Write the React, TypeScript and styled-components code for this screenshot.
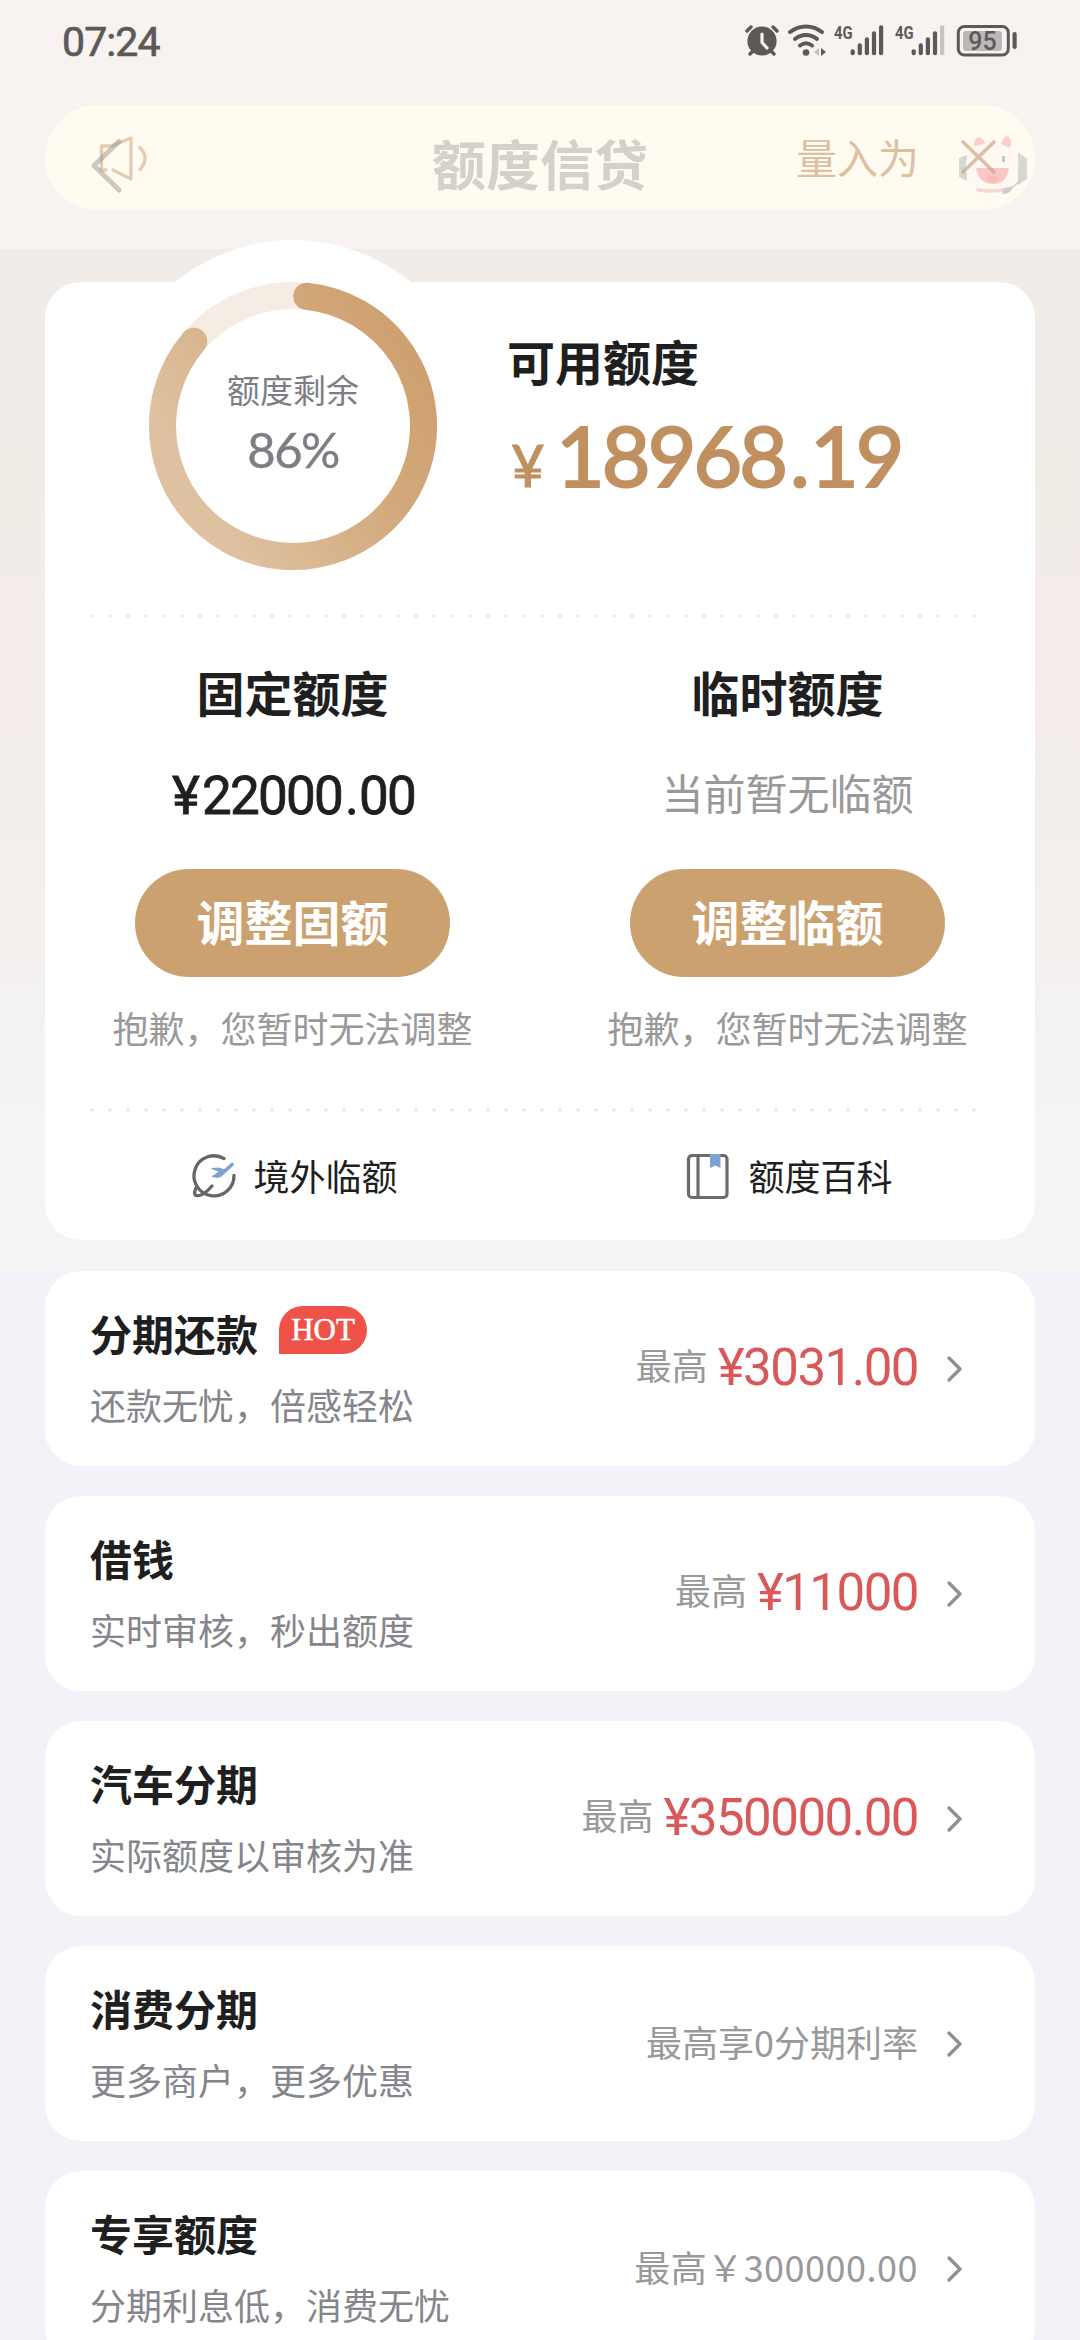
import React from "react";
import styled, { createGlobalStyle } from "styled-components";

const CJK = `"Noto Sans CJK SC", sans-serif`;

const Global = createGlobalStyle`
  * { box-sizing: border-box; }
  html, body { margin: 0; padding: 0; }
  body { width: 1080px; height: 2340px; overflow: hidden; background: #f2f3f8; font-family: ${CJK}; color: #1f1f1f; }
`;

const Page = styled.div`
  width: 1080px;
  height: 2340px;
  overflow: hidden;
  display: flex;
  flex-direction: column;
`;

const Header = styled.header`
  height: 249px;
  flex: none;
  background: #f8f3f1;
  display: flex;
  flex-direction: column;
`;

const StatusBar = styled.div`
  height: 105px;
  flex: none;
  display: flex;
  justify-content: space-between;
  padding: 0 58px 0 62px;
`;

const Clock = styled.div`
  font: 400 41px/42px Roboto, sans-serif;
  -webkit-text-stroke: 0.7px #5c5a59;
  color: #5c5a59;
  margin-top: 21px;
  letter-spacing: -0.9px;
`;

const StatusIcons = styled.svg`
  display: block;
  width: 280px;
  height: 46px;
  margin-top: 13px;
`;

const NoticeBar = styled.div`
  height: 105px;
  flex: none;
  margin: 0 45px;
  border-radius: 53px;
  background: #fffbf0;
  display: grid;
  grid-template-columns: 363px 264px 1fr;
  align-items: center;
  padding-right: 6px;
`;

const BackAndSpeaker = styled.svg`
  display: block;
  width: 66px;
  height: 70px;
  margin-left: 40px;
`;

const PageTitle = styled.h1`
  margin: 11px 0 0;
  text-align: center;
  font-size: 54px;
  line-height: 60px;
  font-weight: 700;
  color: #d6d0ca;
`;

const NoticeEnd = styled.div`
  display: flex;
  justify-content: flex-end;
  align-items: center;
`;

const NoticeText = styled.span`
  font-size: 41px;
  line-height: 50px;
  color: #dcc0a0;
  margin: -4px 36px 0 0;
`;

const Mascot = styled.svg`
  display: block;
  width: 74px;
  height: 75px;
`;

const Summary = styled.section`
  height: 1022px;
  flex: none;
  padding: 33px 45px 0;
  background: linear-gradient(#f1ece7 0, #f3ece8 45%, #f4f4f4 85%);
`;

const Card = styled.div`
  height: 958px;
  border-radius: 36px;
  background: #fff;
  display: flex;
  flex-direction: column;
`;

const Overview = styled.div`
  height: 332px;
  flex: none;
  display: flex;
`;

const RingBox = styled.div`
  width: 372px;
  height: 372px;
  margin: -42px 0 0 62px;
  border-radius: 50%;
  background: #fff;
  display: grid;
  place-items: center;
  & > * { grid-area: 1 / 1; }
`;

const RingSvg = styled.svg`
  display: block;
  width: 290px;
  height: 290px;
`;

const RingLabel = styled.div`
  display: flex;
  flex-direction: column;
  align-items: center;
  color: #7d7d84;
  font-size: 33px;
  line-height: 48px;
  padding-bottom: 9px;
`;

const RingPercent = styled.span`
  font: 400 49px/58px Lato, sans-serif;
  -webkit-text-stroke: 0.4px #7d7d84;
  letter-spacing: -1.6px;
  margin-top: 7px;
`;

const Available = styled.div`
  margin: 48px 0 0 28px;
  display: flex;
  flex-direction: column;
`;

const Heading = styled.h2`
  margin: 0;
  font-size: 48px;
  line-height: 60px;
  font-weight: 700;
`;

const BigAmount = styled.div`
  font: 400 84px/90px Lato, sans-serif;
  -webkit-text-stroke: 2.2px #c09060;
  color: #c09060;
  letter-spacing: -2.9px;
  margin-top: 20px;
  padding-left: 4px;
  display: flex;
  align-items: baseline;
`;

const BigPoint = styled.span`
  margin: 0 3px 0 5px;
`;

const Yen = styled.span`
  width: 45px;
  font-size: 58px;
  line-height: 60px;
  -webkit-text-stroke-width: 1.2px;
`;

const Dots = styled.div`
  height: 4px;
  flex: none;
  margin: 0 45px;
  background: radial-gradient(circle at 2px 2px, #e9e9e9 1.4px, transparent 2.2px) 0 0 / 18px 4px repeat-x;
`;

const Columns = styled.div`
  flex: none;
  display: grid;
  grid-template-columns: 1fr 1fr;
`;

const Limit = styled.div`
  display: flex;
  flex-direction: column;
  align-items: center;
  height: 490px;
  padding-top: 43px;
`;

const LimitAmount = styled.div`
  height: 60px;
  margin-top: 45px;
  padding-left: 2px;
  font: 400 53px/60px Roboto, sans-serif;
  -webkit-text-stroke: 0.8px #1f1f1f;
  letter-spacing: -1.8px;
`;

const LimitYen = styled.span`
  margin-right: 4px;
`;

const LimitPoint = styled.span`
  margin: 0 2px 0 3px;
`;

const LimitEmpty = styled.div`
  height: 60px;
  margin: 41px 0 4px;
  font-size: 42px;
  line-height: 60px;
  color: #999;
`;

const AdjustButton = styled.button`
  width: 315px;
  height: 108px;
  margin: 43px 0 0;
  padding: 0 0 6px;
  border: 0;
  border-radius: 54px;
  background: #cba16f;
  color: #fff;
  font: 700 48px/60px ${CJK};
`;

const Note = styled.p`
  margin: 25px 0 0;
  font-size: 36px;
  line-height: 50px;
  color: #999;
`;

const LinkItem = styled.a`
  display: flex;
  justify-content: center;
  align-items: center;
  gap: 16px;
  height: 128px;
  padding-left: 2px;
  font-size: 36px;
  line-height: 50px;
`;

const LinkText = styled.span`
  margin-top: -2px;
`;

const LinkIcon = styled.svg`
  display: block;
  width: 48px;
  height: 48px;
`;

const List = styled.main`
  display: flex;
  flex-direction: column;
  gap: 30px;
  padding: 0 45px;
`;

const Row = styled.div`
  height: 195px;
  flex: none;
  border-radius: 36px;
  background: #fff;
  padding: 0 69px 0 45px;
  display: flex;
  justify-content: space-between;
`;

const RowText = styled.div`
  padding-top: 33px;
`;

const RowTitle = styled.div`
  display: flex;
  gap: 21px;
  font-size: 42px;
  line-height: 58px;
  font-weight: 700;
`;

const Hot = styled.span`
  width: 88px;
  height: 48px;
  margin-top: 2px;
  border-radius: 24px 24px 24px 0;
  background: #ef5248;
  color: #fff;
  text-align: center;
  font: 400 31px/48px "Liberation Serif", serif;
  -webkit-text-stroke: 0.5px #fff;
`;

const RowSub = styled.div`
  margin-top: 17px;
  font-size: 36px;
  line-height: 50px;
  color: #85858b;
`;

const RowEnd = styled.div`
  display: flex;
  align-items: center;
  color: #999;
  font-size: 36px;
  line-height: 60px;
`;

const RowLabel = styled.span<{ $lifted?: boolean; $spacing?: number }>`
  margin-top: ${(p) => (p.$lifted ? -9 : -6)}px;
  letter-spacing: ${(p) => p.$spacing ?? 0}px;
`;

const Price = styled.span`
  font: 400 51px/60px Roboto, sans-serif;
  letter-spacing: -1.5px;
  color: #d9595a;
  margin: -2px 0 0 10px;
`;

const Chevron = styled.svg`
  display: block;
  width: 20px;
  height: 30px;
  margin-left: 28px;
`;

type Product = { title: string; sub: string; label: string; price?: string; hot?: boolean; spacing?: number };

const products: Product[] = [
  { title: "分期还款", sub: "还款无忧，倍感轻松", label: "最高", price: "¥3031.00", hot: true },
  { title: "借钱", sub: "实时审核，秒出额度", label: "最高", price: "¥11000" },
  { title: "汽车分期", sub: "实际额度以审核为准", label: "最高", price: "¥350000.00" },
  { title: "消费分期", sub: "更多商户，更多优惠", label: "最高享0分期利率" },
  { title: "专享额度", sub: "分期利息低，消费无忧", label: "最高￥300000.00", spacing: 0.5 },
];

const point = (deg: number, r = 130.5) => {
  const a = (deg * Math.PI) / 180;
  return `${(145 + r * Math.sin(a)).toFixed(2)} ${(145 - r * Math.cos(a)).toFixed(2)}`;
};

function Ring() {
  return (
    <RingSvg viewBox="0 0 290 290" fill="none">
      <defs>
        <linearGradient id="ring" x1="0.85" y1="0" x2="0" y2="0.5">
          <stop offset="0" stopColor="#cea070" />
          <stop offset="0.35" stopColor="#d2a87a" />
          <stop offset="1" stopColor="#dec1a0" />
        </linearGradient>
      </defs>
      <circle cx="145" cy="145" r="130.5" stroke="#f5ece4" strokeWidth="27" />
      <path d={`M${point(6)}A130.5 130.5 0 1 1 ${point(310.5)}`} stroke="url(#ring)" strokeWidth="27" strokeLinecap="round" />
    </RingSvg>
  );
}

function Status() {
  const bars = [6, 12, 18, 24, 30];
  return (
    <StatusIcons viewBox="0 -10 280 46" fill="#5c5a59">
      <g stroke="#5c5a59" strokeWidth="3.4" strokeLinecap="round" fill="none">
        <path d="M5 8l4-4M35 8l-4-4M8 31l4-4M32 31l-4-4" />
      </g>
      <circle cx="20" cy="18" r="14.6" />
      <path d="M20 11v8.500l5 5.500" stroke="#f8f3f1" strokeWidth="3.2" fill="none" strokeLinecap="round" strokeLinejoin="round" />
      <g stroke="#5c5a59" strokeWidth="4" strokeLinecap="round" fill="none">
        <path d="M48 9c9.500-7.500 22.500-7.500 32 0M53 16c6.500-5.500 15.500-5.500 22 0M58 22.500c4-3 8-3 12 0" />
      </g>
      <circle cx="64" cy="29.500" r="3.300" />
      <path d="M79 25l5 4-5 4z" />
      <path d="M77 25l-5 4 5 4z" fill="#c4c0be" />
      {[0, 1].map((n) => (
        <g key={n} transform={`translate(${n * 61} 0)`}>
          <text transform="translate(92 15.500) scale(.8 1)" fontFamily="Roboto, sans-serif" fontWeight="700" fontSize="18.500">4G</text>
          {bars.map((h, i) => (
            <rect key={h} x={108.6 + i * 7.1} y={32.3 - h} width="4.200" height={h} rx="2" fill={n === 1 && i === 4 ? "#c6c3c1" : "#5c5a59"} />
          ))}
        </g>
      ))}
      <rect x="216.300" y="3.500" width="50" height="28.500" rx="6" fill="none" stroke="#5c5a59" strokeWidth="3" />
      <rect x="221" y="8" width="39" height="20" rx="3" fill="#bbb8b7" />
      <rect x="270.500" y="9" width="4.200" height="17" rx="2" />
      <text x="240.500" y="26.500" textAnchor="middle" fontFamily="Roboto, sans-serif" fontWeight="500" fontSize="25">95</text>
    </StatusIcons>
  );
}

export default function App() {
  return (
    <Page>
      <Global />
      <Header>
        <StatusBar>
          <Clock>07:24</Clock>
          <Status />
        </StatusBar>
        <NoticeBar>
          <BackAndSpeaker viewBox="85 122.5 66 70" fill="none" strokeLinecap="round" strokeLinejoin="round">
            <path d="M106 169.500h-4.500V145.500h10L131 137.500v41L113 169.500M140 147q10 11 0 22" stroke="#e5cbb0" strokeWidth="3.300" />
            <path d="M119 141L94 165l25 24.500" stroke="#a39d98" strokeOpacity=".55" strokeWidth="5" />
          </BackAndSpeaker>
          <PageTitle>额度信贷</PageTitle>
          <NoticeEnd>
            <NoticeText>量入为</NoticeText>
            <Mascot viewBox="955 120 74 75" fill="none">
              <path d="M959 158l8-3v26l-8-4zM1027 159l-9-7v33l9-6z" fill="#d7d8cf" />
              <ellipse cx="992" cy="166" rx="26" ry="25" fill="#fff8f3" stroke="#fdf3ee" />
              <path d="M974 146q0-9 6-9 4 2 5 7zM1001 144q2-8 7-8 5 5 2 12z" fill="#fbcfcd" />
              <path d="M976 168h33q-2 16-16 16t-17-16z" fill="#fbc8c5" />
              <path d="M985 179q8-7 15 0-7 6-15 0z" fill="#f8bab7" />
              <path d="M978 190q13 2 25 0" stroke="#fad5d2" strokeWidth="3.500" strokeLinecap="round" />
              <path d="M1003.500 156v6" stroke="#c9c5c2" strokeWidth="3" />
              <path d="M1023 178l-10 9" stroke="#cfcfc9" strokeWidth="1.500" />
              <path d="M1014 186l-10 2-2 6q8 1 12-8z" fill="#cfcfc9" />
              <path d="M963 142l31 30M994 142l-31 30" stroke="#bf9c77" strokeOpacity=".6" strokeWidth="3.600" strokeLinecap="round" />
            </Mascot>
          </NoticeEnd>
        </NoticeBar>
      </Header>
      <Summary>
        <Card>
          <Overview>
            <RingBox>
              <Ring />
              <RingLabel>
                额度剩余
                <RingPercent>86%</RingPercent>
              </RingLabel>
            </RingBox>
            <Available>
              <Heading>可用额度</Heading>
              <BigAmount><Yen>¥</Yen>18968<BigPoint>.</BigPoint>19</BigAmount>
            </Available>
          </Overview>
          <Dots />
          <Columns>
            <Limit>
              <Heading>固定额度</Heading>
              <LimitAmount><LimitYen>¥</LimitYen>22000<LimitPoint>.</LimitPoint>00</LimitAmount>
              <AdjustButton>调整固额</AdjustButton>
              <Note>抱歉，您暂时无法调整</Note>
            </Limit>
            <Limit>
              <Heading>临时额度</Heading>
              <LimitEmpty>当前暂无临额</LimitEmpty>
              <AdjustButton>调整临额</AdjustButton>
              <Note>抱歉，您暂时无法调整</Note>
            </Limit>
          </Columns>
          <Dots />
          <Columns>
            <LinkItem>
              <LinkIcon viewBox="189 1152 48 48" fill="none" stroke="#666" strokeWidth="3.300" strokeLinecap="round" strokeLinejoin="round">
                <path d="M224 1158.500A20 20 0 1 0 234 1175.500" />
                <path d="M196.500 1187q-5 10 3 8.500 5-1 12.500-9.500" />
                <path d="M232 1164.500l-12 11" stroke="#7ba3d3" strokeWidth="3.600" />
                <path d="M212 1168.500l7-.5 6 2-7 7.500-6-1 2.500-1.500 4.500-3.500z" fill="#7ba3d3" stroke="#7ba3d3" strokeWidth="1" />
              </LinkIcon>
              <LinkText>境外临额</LinkText>
            </LinkItem>
            <LinkItem>
              <LinkIcon viewBox="0 0 48 48" fill="none" stroke="#6b6b6b" strokeWidth="3.200">
                <rect x="4.500" y="3.500" width="38.500" height="42" rx="3.500" />
                <path d="M14 3v43" />
                <path d="M26 2h10.500v14l-5.250-2.500L26 16z" fill="#7ba3d3" stroke="none" />
              </LinkIcon>
              <LinkText>额度百科</LinkText>
            </LinkItem>
          </Columns>
        </Card>
      </Summary>
      <List>
        {products.map((p) => (
          <Row key={p.title}>
            <RowText>
              <RowTitle>{p.title}{p.hot && <Hot>HOT</Hot>}</RowTitle>
              <RowSub>{p.sub}</RowSub>
            </RowText>
            <RowEnd>
              <RowLabel $lifted={!!p.price} $spacing={p.spacing}>{p.label}</RowLabel>
              {p.price && <Price>{p.price}</Price>}
              <Chevron viewBox="0 0 20 30" fill="none">
                <path d="M3 4l11 11L3 26" stroke="#8f8f8f" strokeWidth="3.300" strokeLinecap="round" strokeLinejoin="round" />
              </Chevron>
            </RowEnd>
          </Row>
        ))}
      </List>
    </Page>
  );
}
